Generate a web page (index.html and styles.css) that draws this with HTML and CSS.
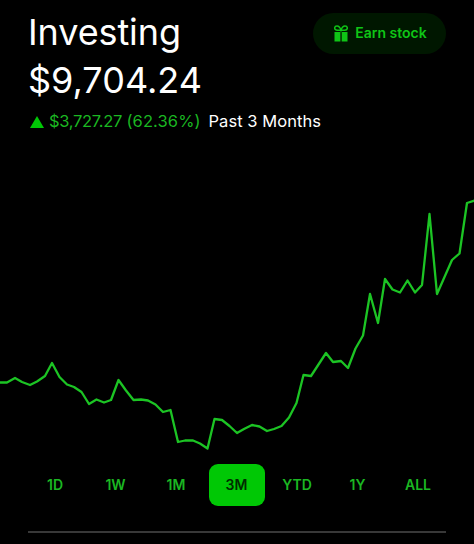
FILE: index.html
```
<!DOCTYPE html>
<html lang="en">
<head>
<meta charset="utf-8">
<title>Investing</title>
<link rel="stylesheet" href="styles.css">
</head>
<body>
<main class="screen">
  <header class="header">
    <div class="summary">
      <h1 class="title">Investing</h1>
      <div class="balance">$9,704.24</div>
    </div>
    <button class="earn">
      <svg class="gift" viewBox="0 0 14 17" width="14" height="17">
        <path d="M7 5.2H3.2C1.5 5.2.7 4.2.7 3.100.7 1.900 1.700 1 3 1 5 1 6.300 2.900 7 5.200 7.700 2.900 9 1 11 1c1.300 0 2.300.9 2.300 2.100 0 1.100-.8 2.100-2.500 2.100z" fill="none" stroke="currentColor" stroke-width="1.500"/>
        <path d="M.5 7h5.900v9.500H.5zM7.700 7h5.800v9.500H7.700z" fill="currentColor"/>
      </svg>
      <span class="earn-label">Earn stock</span>
    </button>
  </header>
  <div class="change">
    <svg class="arrow" viewBox="0 0 14 12" width="14" height="12"><path d="M7 0l7 12H0z" fill="currentColor"/></svg>
    <span class="gain"><span class="amount">$3,727.27</span> <span class="percent">(62.36%)</span></span>
    <span class="period">Past 3 Months</span>
  </div>
  <svg class="chart" viewBox="0 190 474 270" width="474" height="270">
    <polyline points="0,382.5 7,382.5 15,378 22,382 30,385 37,381.5 45,376 52,363 59.5,377 67,384.5 74,387 81.5,392 89,404 96.5,399.5 104,402.5 111,400 118.5,380 126,390.5 133.5,400 141,399.5 148,400.5 155.5,404.5 163,412 170.500,410 178,442 185,440.5 193,440.5 200,443.5 207.5,448.500 214.5,419 222,420 229.5,426 237,433 244,429 252,425 259.5,426.5 267,431 274,429 281.5,426 289,417.5 296.5,403 303.5,375 311,376 326,353 333,362 341,361 348,368 355.5,348.5 363,335.5 370,294 378,323 385,279 392.500,289.5 400,292.5 407.5,280.5 415,292.5 422,285 429.5,214 437,294 444.5,277 452,260 459.5,253.5 467,203 475,200.500"/>
  </svg>
  <nav class="ranges">
    <button class="range">1D</button>
    <button class="range">1W</button>
    <button class="range">1M</button>
    <button class="range active">3M</button>
    <button class="range">YTD</button>
    <button class="range">1Y</button>
    <button class="range">ALL</button>
  </nav>
  <hr class="divider">
</main>
</body>
</html>
```
FILE: styles.css
```
* { box-sizing: border-box; }
body {
  margin: 0;
  background: #000;
  color: #fff;
  font-family: Inter, "Liberation Sans", sans-serif;
}
button {
  border: 0;
  padding: 0;
  background: none;
  color: inherit;
  font: inherit;
}
.screen {
  width: 474px;
  height: 544px;
  overflow: hidden;
  display: flex;
  flex-direction: column;
}
.header {
  display: flex;
  justify-content: space-between;
  height: 104px;
  padding: 9px 28px 0 28px;
}
.title, .balance {
  margin: 0;
  font-size: 36px;
  font-weight: 400;
  line-height: 47px;
  white-space: nowrap;
}
.title { letter-spacing: -0.1px; }
.balance { padding-top: 1px; letter-spacing: 0; }
.earn {
  display: flex;
  align-items: center;
  justify-content: center;
  gap: 7px;
  width: 133px;
  height: 41px;
  margin-top: 4px;
  padding-left: 2px;
  border-radius: 21px;
  background: #001700;
  color: #0fc516;
  font-size: 14px;
  font-weight: 600;
  white-space: nowrap;
}
.earn-label { padding-bottom: 2px; }
.change {
  display: flex;
  align-items: center;
  height: 36px;
  padding-left: 30px;
  font-size: 16.500px;
  line-height: 34px;
  white-space: nowrap;
}
.arrow { margin-right: 5px; color: #00c805; }
.gain { display: flex; width: 159.500px; color: #1bb722; }
.amount { width: 77.500px; letter-spacing: -0.3px; }
.percent { letter-spacing: 0.1px; }
.period { letter-spacing: 0.050px; }
.gain, .period { height: 36px; }
.chart { display: block; margin-top: 50px; flex: none; }
.chart polyline {
  fill: none;
  stroke: #1cc424;
  stroke-width: 2.300;
  stroke-linejoin: round;
}
.ranges {
  display: flex;
  justify-content: space-between;
  height: 42px;
  margin: 4px 28px 0 27px;
}
.range {
  width: 56px;
  padding-bottom: 2px;
  border-radius: 9px;
  color: #1bb722;
  font-size: 14px;
  font-weight: 600;
}
.active { background: #00c805; color: #002b00; }
.divider {
  width: 418px;
  height: 1.500px;
  margin: 25px 28px 0;
  border: 0;
  background: #383838;
}
```
